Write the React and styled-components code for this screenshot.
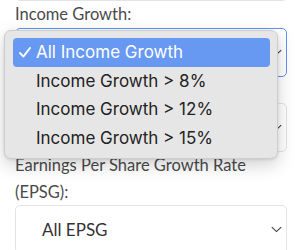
import React from 'react';
import styled, { createGlobalStyle } from 'styled-components';

const GlobalStyle = createGlobalStyle`
  html, body {
    margin: 0;
    padding: 0;
    background: #ffffff;
    overflow: hidden;
  }
`;

const Page = styled.div`
  position: relative;
  width: 295px;
  height: 250px;
  overflow: hidden;
  font-family: Lato, "Open Sans", sans-serif;
`;

const Form = styled.div`
  display: flex;
  flex-direction: column;
  padding: 0 8px 0 15px;
  margin-top: -48px;
`;

const Label = styled.div`
  min-height: 26.5px;
  font-size: 16.5px;
  line-height: 26.5px;
  color: #4a4a4a;
  padding-right: 14px;
`;

const SelectBox = styled.div`
  box-sizing: border-box;
  height: 49px;
  display: flex;
  align-items: center;
  justify-content: space-between;
  padding: 0 4px 0 26px;
  border: 1px solid ${props => (props.focused ? '#5f93f0' : '#e3e3e3')};
  border-radius: 5px;
  font-size: 17px;
  color: #333333;
`;

const Chevron = () => (
  <svg width="11" height="7" viewBox="0 0 11 7">
    <path d="M0.8 1.2 L5.5 5.6 L10.2 1.2" fill="none" stroke="#3a3a3a" strokeWidth="1.1" />
  </svg>
);

const Menu = styled.div`
  position: absolute;
  left: 4px;
  top: 30px;
  width: 274px;
  box-sizing: border-box;
  padding: 7px 7px 6px 8px;
  background: #e6e6e6;
  border: 1px solid #cdcdcd;
  border-radius: 7px;
  box-shadow: 0 6px 18px rgba(0, 0, 0, 0.18), 0 1px 3px rgba(0, 0, 0, 0.1);
  font-family: Inter, "Liberation Sans", sans-serif;
`;

const Option = styled.div`
  display: flex;
  align-items: center;
  height: 28.5px;
  padding-left: 6px;
  border-radius: 4px;
  font-size: 17px;
  color: ${props => (props.selected ? '#ffffff' : '#222222')};
  background: ${props => (props.selected ? '#6799f3' : 'transparent')};
`;

const CheckSlot = styled.span`
  width: 17px;
  flex-shrink: 0;
  display: flex;
  align-items: center;
`;

const CheckMark = () => (
  <svg width="12" height="11" viewBox="0 0 12 11">
    <path d="M1 6 L4.3 9.6 L11 1" fill="none" stroke="#ffffff" strokeWidth="1.9" strokeLinecap="round" strokeLinejoin="round" />
  </svg>
);

const options = ['All Income Growth', 'Income Growth > 8%', 'Income Growth > 12%', 'Income Growth > 15%'];

const App = () => (
  <Page>
    <GlobalStyle />
    <Form>
      <SelectBox />
      <Label>Income Growth:</Label>
      <SelectBox focused>
        <span />
        <Chevron />
      </SelectBox>
      <Label />
      <SelectBox>
        <span />
        <Chevron />
      </SelectBox>
      <Label>Earnings Per Share Growth Rate (EPSG):</Label>
      <SelectBox>
        <span>All EPSG</span>
        <Chevron />
      </SelectBox>
    </Form>
    <Menu>
      {options.map((opt, i) => (
        <Option key={opt} selected={i === 0}>
          <CheckSlot>{i === 0 && <CheckMark />}</CheckSlot>
          {opt}
        </Option>
      ))}
    </Menu>
  </Page>
);

export default App;
